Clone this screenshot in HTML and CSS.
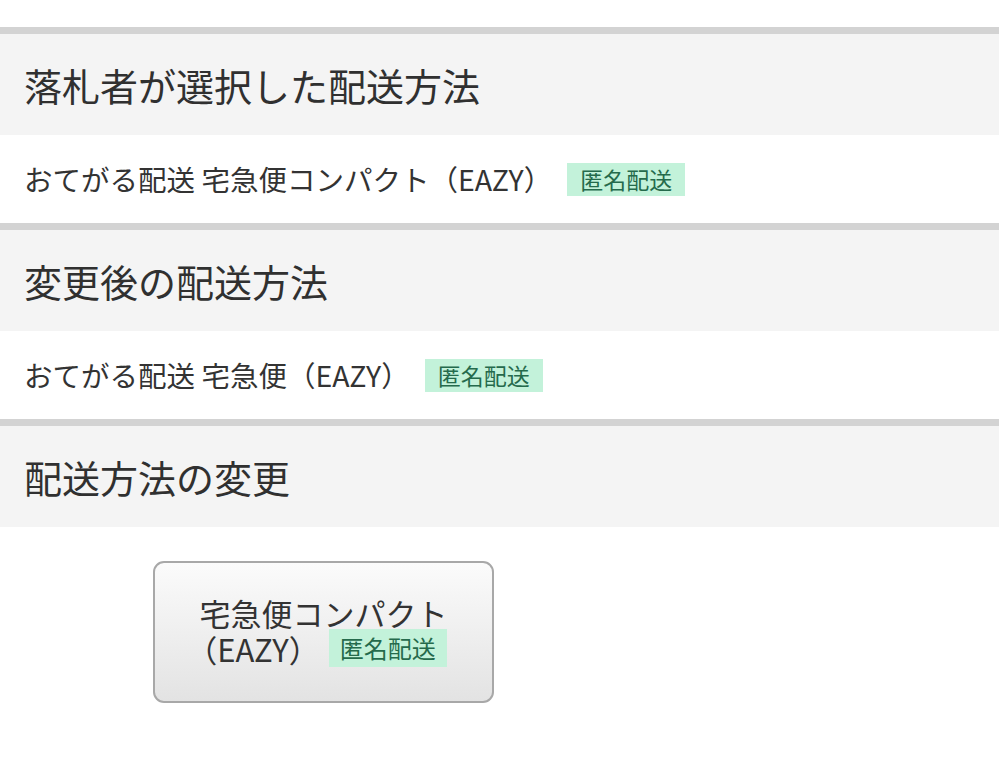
FILE: index.html
```html
<!DOCTYPE html>
<html lang="ja">
<head>
<meta charset="utf-8">
<link rel="stylesheet" href="styles.css">
</head>
<body>
<div class="page">
  <section class="section">
    <h2 class="section-title">落札者が選択した配送方法</h2>
    <div class="section-body">
      <span class="method">おてがる配送 宅急便コンパクト（EAZY）</span>
      <span class="badge">匿名配送</span>
    </div>
  </section>
  <section class="section">
    <h2 class="section-title">変更後の配送方法</h2>
    <div class="section-body">
      <span class="method">おてがる配送 宅急便（EAZY）</span>
      <span class="badge">匿名配送</span>
    </div>
  </section>
  <section class="section">
    <h2 class="section-title">配送方法の変更</h2>
    <div class="choices">
      <button class="choice" type="button">
        <span class="choice-line">宅急便コンパクト</span>
        <span class="choice-line choice-line-2">
          <span class="choice-paren">（EAZY）</span>
          <span class="badge badge-lg">匿名配送</span>
        </span>
      </button>
    </div>
  </section>
</div>
</body>
</html>
```

FILE: styles.css
```css
* { box-sizing: border-box; }
html, body {
  margin: 0;
  padding: 0;
  background: #ffffff;
}
body {
  font-family: "Noto Sans CJK JP", "Noto Sans", sans-serif;
  color: #333333;
}
.page {
  padding-top: 27px;
}
.section {
  border-top: 7px solid #d3d3d3;
}
.section-title {
  margin: 0;
  height: 101px;
  display: flex;
  align-items: center;
  padding-left: 24px;
  background: #f4f4f4;
  font-size: 38px;
  font-weight: 400;
  color: #303030;
  line-height: 1;
}
.section-body {
  height: 88px;
  display: flex;
  align-items: center;
  padding-left: 24px;
  font-size: 28.5px;
  line-height: 1;
}
.method {
  white-space: nowrap;
}
.badge {
  display: inline-flex;
  align-items: center;
  height: 33px;
  padding: 0 13px;
  margin-left: 15px;
  background: #c3f2da;
  color: #256a4c;
  font-size: 23px;
  line-height: 1;
}
.choices {
  padding: 34px 0 0 153px;
}
.choice {
  width: 341px;
  height: 142px;
  border: 2px solid #a8a8a8;
  border-radius: 11px;
  background: linear-gradient(#fbfbfb, #e3e3e3);
  font-family: "Noto Sans CJK JP", "Noto Sans", sans-serif;
  color: #333333;
  font-size: 31px;
  line-height: 1;
  padding: 0;
  display: flex;
  flex-direction: column;
  align-items: center;
  justify-content: center;
}
.choice-line {
  display: flex;
  align-items: center;
  white-space: nowrap;
  height: 32px;
}
.choice-line-2 {
  height: 40px;
}
.choice-paren {
  margin-left: -14px;
}
.badge-lg {
  height: 38px;
  font-size: 24px;
  padding: 0 11px;
  margin-left: 9px;
}
```
